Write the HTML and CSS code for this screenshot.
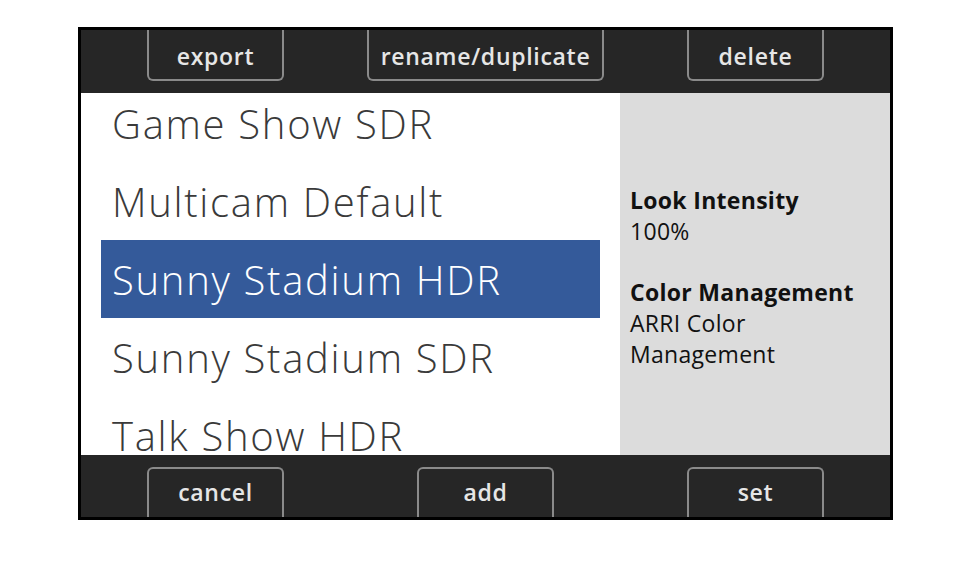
FILE: index.html
```html
<!DOCTYPE html>
<html>
<head>
<meta charset="utf-8">
<link rel="stylesheet" href="styles.css">
</head>
<body>
<div class="frame">
  <div class="bar bar-top">
    <div class="btn btn-top">export</div>
    <div class="btn btn-top btn-wide">rename/duplicate</div>
    <div class="btn btn-top">delete</div>
  </div>
  <div class="main">
    <div class="list-wrap">
      <ul class="list">
        <li class="row">Game Show SDR</li>
        <li class="row">Multicam Default</li>
        <li class="row selected">Sunny Stadium HDR</li>
        <li class="row">Sunny Stadium SDR</li>
        <li class="row">Talk Show HDR</li>
      </ul>
    </div>
    <div class="info">
      <div class="info-block">
        <div class="label">Look Intensity</div>
        <div class="value">100%</div>
      </div>
      <div class="info-block">
        <div class="label">Color Management</div>
        <div class="value">ARRI Color<br>Management</div>
      </div>
    </div>
  </div>
  <div class="bar bar-bottom">
    <div class="btn btn-bottom">cancel</div>
    <div class="btn btn-bottom">add</div>
    <div class="btn btn-bottom">set</div>
  </div>
</div>
</body>
</html>
```
FILE: styles.css
```css
html, body {
  margin: 0;
  padding: 0;
  background: #ffffff;
}
body {
  font-family: "Open Sans", "Noto Sans", sans-serif;
}
.frame {
  box-sizing: border-box;
  margin: 27px 0 0 78px;
  width: 815px;
  height: 493px;
  border: 3px solid #000;
  display: flex;
  flex-direction: column;
  background: #262626;
}
.bar {
  display: flex;
  justify-content: space-between;
  padding: 0 66px;
  background: #262626;
}
.bar-top {
  height: 63px;
  align-items: flex-start;
}
.bar-bottom {
  height: 62px;
  align-items: flex-end;
}
.btn {
  box-sizing: border-box;
  width: 137px;
  height: 51px;
  border: 2px solid #8a8a8a;
  color: #e6e6e6;
  font-size: 23px;
  font-weight: 600;
  letter-spacing: 0.7px;
  display: flex;
  align-items: center;
  justify-content: center;
  white-space: nowrap;
}
.btn-wide {
  width: 237px;
}
.btn-top {
  border-top: none;
  border-radius: 0 0 6px 6px;
  padding-top: 2px;
}
.btn-bottom {
  height: 50px;
  border-bottom: none;
  border-radius: 6px 6px 0 0;
  padding-bottom: 3px;
}
.main {
  height: 362px;
  display: flex;
  background: #ffffff;
}
.list-wrap {
  width: 539px;
  overflow: hidden;
  box-sizing: border-box;
  padding: 0 20px;
}
.list {
  list-style: none;
  margin: -9px 0 0 0;
  padding: 0;
}
.row {
  height: 78px;
  display: flex;
  align-items: center;
  padding-left: 11px;
  font-size: 40px;
  font-weight: 300;
  letter-spacing: 1.7px;
  color: #3a3a3a;
  white-space: nowrap;
}
.selected {
  background: #345a9a;
  color: #ffffff;
}
.info {
  flex: 1;
  background: #dcdcdc;
  display: flex;
  flex-direction: column;
  justify-content: center;
  gap: 30px;
  padding: 7px 0 0 10px;
  color: #111;
  font-size: 23px;
  letter-spacing: 0.3px;
  line-height: 31px;
}
.label {
  font-weight: 700;
}
.value {
  font-weight: 400;
}
```
